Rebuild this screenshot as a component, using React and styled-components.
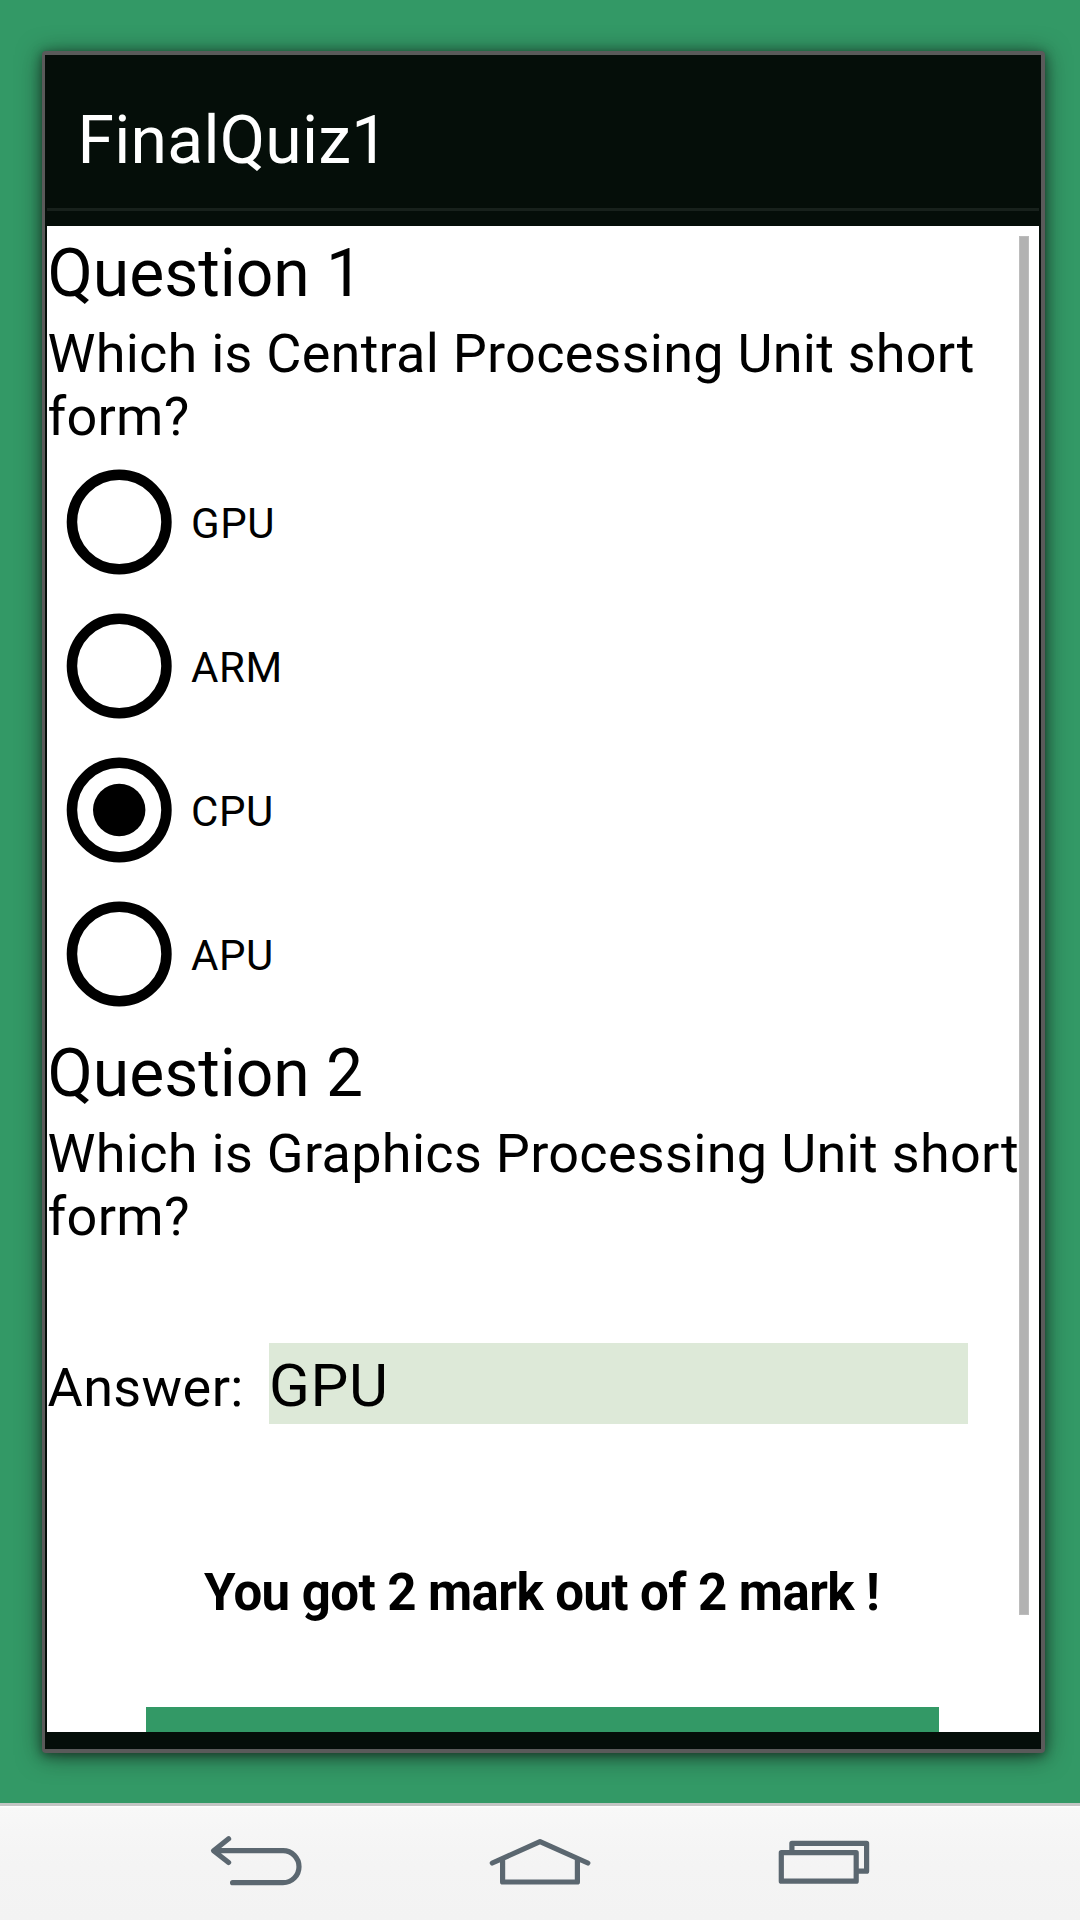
import React, { useState } from 'react';
import styled, { createGlobalStyle } from 'styled-components';

const Reset = createGlobalStyle`
  *, *::before, *::after { box-sizing: border-box; }
  body { margin: 0; background: #339966; }
`;

const Screen = styled.div`
  display: flex;
  flex-direction: column;
  width: 1080px;
  height: 1920px;
  overflow: hidden;
  background: #339966;
  color: #000;
  font-family: Roboto, 'Noto Sans', sans-serif;
`;

const Stage = styled.main`
  flex: 1;
  min-height: 0;
  display: flex;
  padding: 51px 35px 50px 42px;
`;

const Dialog = styled.section`
  flex: 1;
  min-height: 0;
  display: flex;
  flex-direction: column;
  padding: 0 2px 17px;
  background: #050e09;
  border: 4px solid #5a5a5a;
  border-left-width: 3px;
  border-radius: 4px;
  box-shadow: 0 2px 10px rgba(16, 20, 18, 0.5), 0 3px 24px rgba(16, 20, 18, 0.6);
`;

const TitleBar = styled.header`
  flex: none;
  height: 156px;
  padding: 47px 0 0 30.5px;
  border-bottom: 3px solid #18211c;
  color: #fff;
  font-size: 66px;
  line-height: 77px;
  letter-spacing: 0.25px;
`;

const Scroller = styled.div`
  position: relative;
  flex: 1;
  min-height: 0;
  margin-top: 15px;
  overflow: hidden;
  display: flex;
  flex-direction: column;
  background: #fff;
`;

const ScrollThumb = styled.div`
  position: absolute;
  top: 10px;
  right: 10px;
  width: 10px;
  height: 1379px;
  background: #b2b2b2;
  border: 1px solid #bcbcbc;
`;

const Heading = styled.h2`
  flex: none;
  margin: 9px 0 10px;
  padding-left: 0.5px;
  font-size: 66px;
  font-weight: 400;
  line-height: 77px;
  letter-spacing: -0.05px;
`;

const Prompt = styled.p`
  flex: none;
  margin: 0;
  padding-left: 0.5px;
  font-size: 54px;
  line-height: 63px;
  letter-spacing: ${(p) => p.$tracking}px;
  white-space: pre;
`;

const Options = styled.div`
  flex: none;
  display: flex;
  flex-direction: column;
  padding-top: 2px;
`;

const Option = styled.label`
  display: flex;
  align-items: center;
  gap: 19px;
  height: 144px;
  padding-left: 19px;
  font-size: 42px;
  line-height: 49px;
`;

const OptionText = styled.span`
  padding-top: 2px;
  letter-spacing: 0.6px;
`;

const RadioIcon = styled.svg`
  flex: none;
  width: 106px;
  height: 106px;
`;

const AnswerRow = styled.div`
  flex: none;
  display: flex;
  align-items: flex-start;
  margin-top: 95px;
`;

const AnswerLabel = styled.span`
  width: 222px;
  padding: 13px 0 0 0.5px;
  font-size: 54px;
  line-height: 63px;
  letter-spacing: 0.4px;
`;

const AnswerField = styled.div`
  width: 699px;
  height: 81px;
  padding-top: 8px;
  background: #dde9d8;
  font-size: 60px;
  line-height: 70px;
  letter-spacing: 0.6px;
`;

const Result = styled.p`
  flex: none;
  margin: 139px 0 0;
  padding-left: 157px;
  font-size: 51px;
  font-weight: 700;
  line-height: 60px;
  letter-spacing: -0.58px;
  white-space: nowrap;
`;

const SubmitButton = styled.button`
  flex: none;
  width: 793px;
  height: 120px;
  margin: 84px 0 0 99px;
  padding: 0;
  border: 0;
  background: #339966;
`;

const NavBar = styled.nav`
  flex: none;
  display: flex;
  gap: 172px;
  height: 117px;
  padding: 24px 0 0 200px;
  border-top: 3px solid #c3c5c4;
  background: linear-gradient(#ffffff 0, #f8f8f8 2px, #f6f6f6 26px, #f4f4f4 60px, #f3f3f3);
`;

const NavIcon = styled.svg`
  width: 112px;
  height: 60px;
  fill: none;
  stroke: #5b6770;
  stroke-width: 5.2;
  stroke-linecap: round;
  stroke-linejoin: round;
`;

function Radio({ checked }) {
  return (
    <RadioIcon viewBox="0 0 106 106">
      <circle cx="53.2" cy="53" r="47.25" fill="none" stroke="#000" strokeWidth="10.5" />
      {checked && <circle cx="53.2" cy="53" r="26.2" />}
    </RadioIcon>
  );
}

function Question({ title, lines, tracking }) {
  return (
    <>
      <Heading>{title}</Heading>
      <Prompt $tracking={tracking}>{lines.join('\n')}</Prompt>
    </>
  );
}

export default function App() {
  const [choice, setChoice] = useState('CPU');
  return (
    <Screen>
      <Reset />
      <Stage>
        <Dialog>
          <TitleBar>FinalQuiz1</TitleBar>
          <Scroller>
            <Question
              title="Question 1"
              tracking={0.25}
              lines={['Which is Central Processing Unit short', 'form?']}
            />
            <Options>
              {['GPU', 'ARM', 'CPU', 'APU'].map((name) => (
                <Option key={name} onClick={() => setChoice(name)}>
                  <Radio checked={choice === name} />
                  <OptionText>{name}</OptionText>
                </Option>
              ))}
            </Options>
            <Question
              title="Question 2"
              tracking={0.31}
              lines={['Which is Graphics Processing Unit short', 'form?']}
            />
            <AnswerRow>
              <AnswerLabel>Answer:</AnswerLabel>
              <AnswerField>GPU</AnswerField>
            </AnswerRow>
            <Result>You got 2 mark out of 2 mark !</Result>
            <SubmitButton />
            <ScrollThumb />
          </Scroller>
        </Dialog>
      </Stage>
      <NavBar>
        <NavIcon viewBox="200 1830 112 60">
          <path d="M228.6 1838.8L213.6 1850.7L228.6 1862.5M215 1850.7H283a16 16 0 0 1 0 32H232.6" />
        </NavIcon>
        <NavIcon viewBox="484 1830 112 60">
          <path d="M492.3 1863L540 1841.7L587.8 1863M502.6 1860V1882H577.4V1860" />
        </NavIcon>
        <NavIcon viewBox="768 1830 112 60">
          <path d="M791.9 1852V1843.3H866.6V1871.2H857M781.3 1852.7H856.2V1881.2H781.3Z" />
        </NavIcon>
      </NavBar>
    </Screen>
  );
}
